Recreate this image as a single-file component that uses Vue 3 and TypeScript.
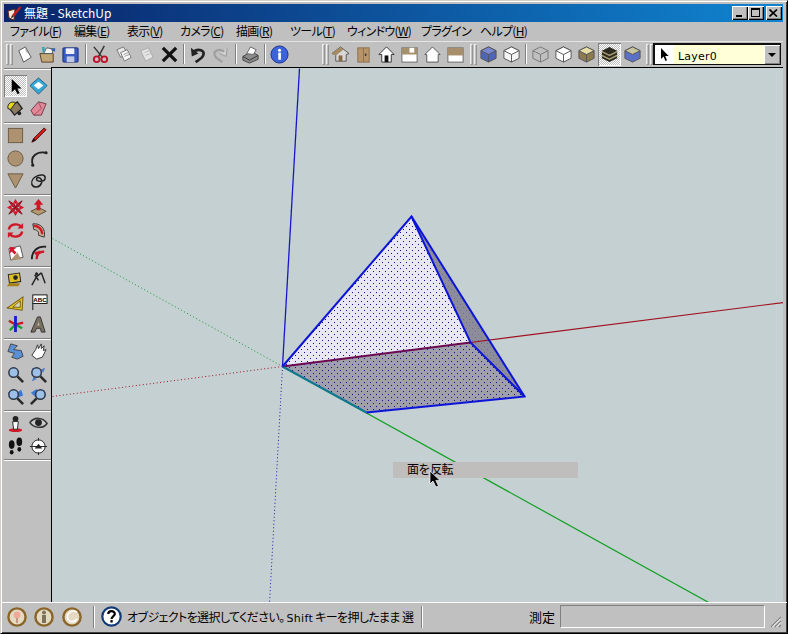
<!-- SketchUp main window, Japanese UI, with a selected pyramid on the canvas -->
<template>
  <div class="window">
    <div class="titlebar">
      <svg class="app-icon" viewBox="0 0 16 16" v-html="appIcon"></svg>
      <span class="title">無題 - SketchUp</span>
      <div class="caption-btns">
        <button class="cap"><span class="cap-min"></span></button>
        <button class="cap"><span class="cap-max"></span></button>
        <button class="cap cap-close"><svg viewBox="0 0 9 8"><path d="M0.5 0.5L8 7.5M8 0.5L0.5 7.5" stroke="#000" stroke-width="1.7" /></svg></button>
      </div>
    </div>

    <nav class="menubar">
      <span v-for="m in menus" :key="m.label" class="menu" :style="{ width: m.w + 'px' }">{{ m.label }}<template v-if="m.key">(<u>{{ m.key }}</u>)</template></span>
    </nav>

    <div class="toolbar">
      <template v-for="(g, gi) in topGroups" :key="gi">
        <span v-if="g.grip" class="grip"><i></i><i></i></span>
        <span v-if="g.gap" class="vsep" :style="{ marginInline: (g.gap - 2) / 2 + 'px' }"></span>
        <span v-for="name in g.icons" :key="name" class="tb-btn" :class="{ pressed: name === 'striped' }">
          <svg viewBox="0 0 20 20" v-html="icons[name]"></svg>
        </span>
        <span v-if="g.pad" class="tb-pad" :style="{ width: g.pad + 'px' }"></span>
      </template>
      <div class="layer-box">
        <span class="layer-swatch">
          <svg viewBox="0 0 10 14"><path d="M1 0V11L3.6 8.6L5.4 13L7 12.2L5.2 8H8.6Z" fill="#000" /></svg>
        </span>
        <span class="layer-name">Layer0</span>
        <span class="layer-drop"><i></i></span>
      </div>
    </div>

    <div class="main">
      <aside class="sidebar">
        <template v-for="(section, si) in sideSections" :key="si">
          <div class="side-rule"></div>
          <div class="side-grid">
            <span v-for="name in section" :key="name" class="side-btn" :class="{ pressed: name === 'select' }">
              <svg viewBox="0 0 20 20" v-html="icons[name]"></svg>
            </span>
          </div>
        </template>
        <div class="side-rule"></div>
      </aside>

      <div class="canvas">
        <svg class="scene" viewBox="51.5 67.5 732 535" width="732" height="535">
          <defs>
            <pattern id="dots" width="6" height="6" patternUnits="userSpaceOnUse" patternTransform="translate(0.5 0.5)">
              <rect x="0" y="0" width="1" height="1" fill="#14147c" />
              <rect x="3" y="3" width="1" height="1" fill="#14147c" />
            </pattern>
          </defs>
          <line x1="299" y1="68" x2="282" y2="366" stroke="#1818c8" stroke-width="1.3" />
          <line x1="282" y1="366" x2="269" y2="603" stroke="#1818b0" stroke-dasharray="1 2.5" />
          <line x1="52" y1="238" x2="282" y2="366" stroke="#119a2a" stroke-dasharray="1 2.5" />
          <line x1="282" y1="366" x2="710" y2="603" stroke="#10a020" stroke-width="1.2" />
          <line x1="52" y1="396" x2="282" y2="366" stroke="#a01020" stroke-dasharray="1 2.5" />

          <polygon points="411,216 524,396 470,342" fill="#8c8c9a" />
          <polygon points="411,216 524,396 470,342" fill="url(#dots)" opacity="0.25" />
          <polygon points="282,366 411,216 470,342" fill="#e9e7f4" />
          <polygon points="282,366 411,216 470,342" fill="url(#dots)" />
          <polygon points="282,366 470,342 524,396 366,412" fill="#a0a0ac" />
          <polygon points="282,366 470,342 524,396 366,412" fill="url(#dots)" />

          <line x1="470" y1="342" x2="783" y2="302" stroke="#a01020" stroke-width="1.2" />
          <line x1="282" y1="366" x2="470" y2="342" stroke="#6a0a50" stroke-width="2" />
          <line x1="282" y1="366" x2="366" y2="412" stroke="#107890" stroke-width="2" />
          <g stroke="#0c14d8" stroke-width="2" fill="none">
            <polyline points="282,366 411,216 524,396 366,412" />
            <polyline points="411,216 470,342 524,396" />
          </g>
        </svg>
        <div class="tooltip">面を反転</div>
        <svg class="cursor" viewBox="0 0 12 18"><path d="M1 1V14L4 11L7 17L9.5 16L6.8 10.4H11Z" fill="#000" stroke="#fff" stroke-width="0.7" /></svg>
      </div>
    </div>

    <footer class="statusbar">
      <span v-for="g in geoIcons" :key="g" class="geo"><svg viewBox="0 0 20 20" v-html="icons[g]"></svg></span>
      <span class="stat-sep"></span>
      <svg class="help" viewBox="0 0 21 21">
        <circle cx="10.5" cy="10.5" r="9.2" fill="#fff" stroke="#123a78" stroke-width="2.2" />
        <path d="M7.2 8C7.4 4.2 13.8 4.2 13.8 7.8C13.8 10.3 10.5 10.3 10.5 12.9" fill="none" stroke="#000" stroke-width="2.2" />
        <rect x="9.4" y="14.1" width="2.3" height="2.4" />
      </svg>
      <span class="stat-text">オブジェクトを選択してください。<span class="latin">Shift</span> キーを押したまま 選</span>
      <span class="stat-sep"></span>
      <span class="measure-label">測定</span>
      <div class="measure"></div>
      <svg class="resize" viewBox="0 0 13 13">
        <path d="M12 2L2 12M12 6L6 12M12 10L10 12" stroke="#808080" stroke-width="1.2" />
        <path d="M12 3.4L3.4 12M12 7.4L7.4 12" stroke="#fff" />
      </svg>
    </footer>
  </div>
</template>

<script setup lang="ts">
interface Menu { label: string; key?: string; w: number }
interface Group { icons: string[]; grip?: boolean; gap?: number; pad?: number }

const menus: Menu[] = [
  { label: 'ファイル', key: 'F', w: 64 },
  { label: '編集', key: 'E', w: 53 },
  { label: '表示', key: 'V', w: 53 },
  { label: 'カメラ', key: 'C', w: 56 },
  { label: '描画', key: 'R', w: 54 },
  { label: 'ツール', key: 'T', w: 57 },
  { label: 'ウィンドウ', key: 'W', w: 74 },
  { label: 'プラグイン', w: 59 },
  { label: 'ヘルプ', key: 'H', w: 50 },
]

const topGroups: Group[] = [
  { grip: true, icons: ['new', 'open', 'save'] },
  { gap: 7, icons: ['cut', 'copy', 'paste', 'erase'] },
  { gap: 5, icons: ['undo', 'redo'] },
  { gap: 7, icons: ['print'] },
  { gap: 6, icons: ['info'], pad: 30 },
  { grip: true, icons: ['house', 'door', 'home', 'top', 'front', 'back'], pad: 2 },
  { grip: true, icons: ['xray', 'cubeEdge'] },
  { gap: 6, icons: ['wire', 'hidden', 'shaded', 'striped', 'mono'], pad: 1 },
  { grip: true, icons: [] },
]

const sideSections: string[][] = [
  ['select', 'component', 'paint', 'eraser'],
  ['rect', 'pencil', 'circle', 'arc', 'polygon', 'freehand'],
  ['move', 'pushpull', 'rotate', 'follow', 'scale', 'offset'],
  ['tape', 'dimension', 'protractor', 'text', 'axes', 'text3d'],
  ['orbit', 'pan', 'zoom', 'zoomWin', 'zoomExt', 'zoomPrev'],
  ['position', 'lookaround', 'walk', 'section'],
]

const geoIcons = ['geoA', 'geoB', 'geoC']

const appIcon = `<path d="M2 6L9 4L8 15L3 13Z" fill="#f4ead8" stroke="#5a2a20" /><path d="M6 10L14 1L15 3L8 12Z" fill="#c02020" /><path d="M6 10L8 12L5 13Z" fill="#402020" />`

const arrowRed = '#d01828'
const tan = '#ac9270'
const mag = `<circle cx="8" cy="8" r="5" fill="#9cc0e8" stroke="#303848" stroke-width="1.6" /><path d="M12 12L18 18" stroke="#2a2a2a" stroke-width="2.6" />`
const blueFan = `<path d="M2 6L8 2L10 7L16 3L18 9L10 12L6 10Z" fill="#3a78d8" />`
const box = (c: string, t: string) =>
  `<path d="M10 2L18 6V14L10 18L2 14V6Z" fill="${c}" stroke="#555" /><path d="M10 2L18 6L10 10L2 6Z" fill="${t}" stroke="#555" /><path d="M10 10V18" stroke="#555" />`
const geo = (inner: string) =>
  `<circle cx="10" cy="10" r="8.6" fill="#e4dac4" stroke="#8a6428" stroke-width="2.4" />${inner}`

const icons: Record<string, string> = {
  new: `<path d="M4 6L11 2L17 13L9 18Z" fill="#fff" stroke="#555" /><path d="M11 2L12 7L15 9" fill="none" stroke="#999" />`,
  open: `<path d="M2 9H16V18H4Z" fill="#c2a878" stroke="#5a4020" /><path d="M6 9L9 3L16 4L15 9Z" fill="#f4f4f4" stroke="#555" /><path d="M4 2H7V8H5Z" fill="#28a8b8" /><path d="M13 5L18 3V7Z" fill="#3060b0" />`,
  save: `<rect x="2" y="3" width="16" height="15" rx="1" fill="#3a5cc0" stroke="#1c2c78" /><rect x="5" y="3.5" width="9" height="6" fill="#f0f0f8" /><rect x="6" y="12" width="8" height="6" fill="#c0c8e8" />`,
  cut: `<path d="M3 2L12 13M14 1L8 12" stroke="#333" stroke-width="1.5" /><circle cx="6" cy="15" r="3" fill="none" stroke="#c01028" stroke-width="2" /><circle cx="14" cy="15" r="3" fill="none" stroke="#c01028" stroke-width="2" />`,
  copy: `<path d="M3 5L10 2L14 9L7 13Z" fill="#e8e8e8" stroke="#777" /><path d="M7 8L14 5L18 13L11 17Z" fill="#f8f8f8" stroke="#777" /><path d="M10 10L15 8M11 12L16 10" stroke="#999" />`,
  paste: `<path d="M4 6L12 3L17 13L9 17Z" fill="#e4e4e4" stroke="#aaa" /><path d="M8 8L13 6M9 11L14 9" stroke="#bbb" />`,
  erase: `<path d="M3 3L17 17M17 3L3 17" stroke="#111" stroke-width="3.4" />`,
  undo: `<path d="M3 3L4 12L11 9" fill="#222" /><path d="M6 7C11 3 18 6 16 11C15 14 11 16 8 18" fill="none" stroke="#222" stroke-width="2.8" />`,
  redo: `<path d="M17 3L16 12L9 9" fill="#d0d0d0" stroke="#999" /><path d="M14 7C9 3 2 6 4 11C5 14 9 16 12 18" fill="none" stroke="#a0a0a0" stroke-width="2.4" />`,
  print: `<path d="M2 12L11 7L18 11V15L9 19L2 16Z" fill="#8c8c8c" stroke="#444" /><path d="M6 9L10 2L16 5L13 10Z" fill="#fff" stroke="#666" /><path d="M2 12L9 16L18 11" fill="none" stroke="#333" />`,
  info: `<circle cx="10" cy="10" r="9" fill="#3c64d8" stroke="#1c2c88" /><circle cx="10" cy="5.5" r="1.6" fill="#fff" /><rect x="8.7" y="8" width="2.8" height="7.5" fill="#fff" />`,
  house: `<path d="M1 9L10 2L19 9L16 10V17H5V10Z" fill="#d8d8d8" stroke="#555" /><path d="M1 9L10 2L13 5L5 11Z" fill="#a88a62" /><rect x="8" y="11" width="4" height="6" fill="#8a6a42" />`,
  door: `<rect x="4" y="3" width="12" height="15" fill="#b89468" stroke="#8a7050" /><path d="M10 3V18" stroke="#8a7050" /><rect x="11.5" y="9" width="1.5" height="2.5" fill="#333" />`,
  home: `<path d="M2 10L10 2L18 10H15V18H5V10Z" fill="#fff" stroke="#333" /><rect x="8" y="11" width="4" height="7" fill="#111" />`,
  top: `<rect x="2" y="3" width="16" height="15" fill="#fff" stroke="#666" /><rect x="2" y="3" width="16" height="7" fill="#a88f6c" /><rect x="10" y="3" width="5" height="5" fill="#fff" />`,
  front: `<path d="M2 10L10 2L18 10H16V18H4V10Z" fill="#fff" stroke="#555" />`,
  back: `<rect x="2" y="3" width="16" height="15" fill="#fff" stroke="#666" /><rect x="2" y="3" width="16" height="8" fill="#a88f6c" />`,
  xray: box('#5064b8', '#7888d0'),
  cubeEdge: box('#f4f4f4', '#fff'),
  wire: `<g fill="none" stroke="#777"><path d="M10 2L18 6V14L10 18L2 14V6Z" /><path d="M2 6L10 10L18 6M10 10V18" /></g>`,
  hidden: box('#fff', '#fff'),
  shaded: box('#8c7a52', '#e8dfa8'),
  striped: `<path d="M10 2L18 6V14L10 18L2 14V6Z" fill="#2a2a20" /><path d="M2 7L10 11L18 7M2 11L10 15L18 11" stroke="#a89a70" stroke-width="1.6" fill="none" />`,
  mono: `<path d="M10 2L18 6V14L10 18L2 14V6Z" fill="#5c70c8" stroke="#555" /><path d="M10 2L18 6L10 10L2 6Z" fill="#c8c49c" stroke="#555" />`,

  select: `<path d="M6 2V16L9.5 13L12 18L14.4 17L12 12H16.4Z" fill="#000" />`,
  component: `<path d="M10 1L19 9L10 18L1 9Z" fill="#38a8d8" stroke="#206080" /><path d="M10 5L15 9L10 13L5 9Z" fill="#fff" />`,
  paint: `<path d="M3 9L12 3L17 10L9 17Z" fill="#8a7a60" stroke="#222" stroke-width="1.4" /><path d="M2 10C1 4 7 2 10 4L5 11Z" fill="#e8d820" stroke="#222" /><circle cx="14" cy="15" r="2" fill="#222" />`,
  eraser: `<path d="M2 12L10 3L18 5L13 17L5 17Z" fill="#e08898" stroke="#703848" /><path d="M10 3L13 10L5 17" fill="none" stroke="#a05060" />`,
  rect: `<rect x="2.5" y="2.5" width="15" height="15" fill="${tan}" stroke="#6c5a40" />`,
  pencil: `<path d="M3 17L5 13L16 2L18 4L7 15Z" fill="#d81c1c" stroke="#501010" /><path d="M3 17L5 13L7 15Z" fill="#111" />`,
  circle: `<circle cx="10" cy="10" r="8" fill="${tan}" stroke="#6c5a40" />`,
  arc: `<path d="M4 17C1 8 8 2 18 4" fill="none" stroke="#222" stroke-width="2" /><circle cx="4" cy="17" r="1.6" fill="#222" /><circle cx="18" cy="4" r="1.6" fill="#222" />`,
  polygon: `<path d="M2 3H18L10 18Z" fill="${tan}" stroke="#6c5a40" />`,
  freehand: `<path d="M3 14C1 5 17 1 17 7C17 12 7 12 8 8C9 5 15 8 13 13C11 18 5 18 3 14Z" fill="none" stroke="#222" stroke-width="1.6" />`,
  move: `<path d="M3 3L9 7L10 10L7 9ZM17 3L11 7L10 10L13 9ZM3 17L9 13L10 10L7 11ZM17 17L11 13L10 10L13 11Z" fill="${arrowRed}" stroke="#801020" /><path d="M10 1L13 6H7ZM10 19L13 14H7ZM1 10L6 7V13ZM19 10L14 7V13Z" fill="${arrowRed}" />`,
  pushpull: `<path d="M2 14L10 10L18 14L10 18Z" fill="#b49a70" stroke="#5a4a30" /><path d="M10 1L15 7H12V13H8V7H5Z" fill="${arrowRed}" />`,
  rotate: `<path d="M3 9C4 3 13 2 16 6" fill="none" stroke="${arrowRed}" stroke-width="2.6" /><path d="M18 2V8H12Z" fill="${arrowRed}" /><path d="M17 11C16 17 7 18 4 14" fill="none" stroke="${arrowRed}" stroke-width="2.6" /><path d="M2 18V12H8Z" fill="${arrowRed}" />`,
  follow: `<path d="M4 3C12 2 18 8 16 17L10 15C11 11 8 9 5 9Z" fill="#c8b898" stroke="#333" /><path d="M5 5C10 5 14 9 14 14" fill="none" stroke="${arrowRed}" stroke-width="2.6" />`,
  scale: `<path d="M3 6L15 3L18 15L5 18Z" fill="#fff" stroke="#555" /><path d="M12 10L16 17L5 18Z" fill="${tan}" /><path d="M4 4L11 5L8 7L11 10L9 12L6 9L4 11Z" fill="${arrowRed}" />`,
  offset: `<path d="M3 17C3 8 9 3 18 4" fill="none" stroke="#222" stroke-width="2" /><path d="M8 17C8 12 11 9 16 9" fill="none" stroke="${arrowRed}" stroke-width="2.4" /><path d="M5 10L12 8L9 15Z" fill="${arrowRed}" />`,
  tape: `<path d="M3 4H15V13H3Z" fill="#e0c020" stroke="#222" transform="rotate(-8 9 9)" /><circle cx="10" cy="8" r="2.4" fill="#222" /><path d="M3 14L1 17H13L15 14Z" fill="#a88018" />`,
  dimension: `<path d="M3 16L8 7M13 3L17 14M8 7L13 3M6 5L10 11" stroke="#222" stroke-width="1.5" fill="none" /><circle cx="8" cy="4" r="1.6" fill="#222" />`,
  protractor: `<path d="M2 17L17 3L18 17Z" fill="#e8c820" stroke="#705a10" transform="rotate(8 10 10)" /><path d="M7 15L15 8V15Z" fill="#d8d8c0" stroke="#705a10" />`,
  text: `<rect x="4" y="2" width="15" height="9" fill="#fff" stroke="#111" /><path d="M4 11V18" stroke="#111" /><text x="11.5" y="9" font-family="Liberation Sans, sans-serif" font-size="6.5" font-weight="700" text-anchor="middle">ABC</text>`,
  axes: `<path d="M10 10L4 16M10 10L17 14" stroke="#18a030" stroke-width="2.4" /><path d="M10 10L3 6M10 10L18 8" stroke="#c81818" stroke-width="2.4" /><path d="M10 1V18" stroke="#1820c8" stroke-width="3" />`,
  text3d: `<path d="M2 18L9 2H12L17 18H13L12 14H8L6 18Z" fill="#7a7060" stroke="#333" /><path d="M9 11H11L10 7Z" fill="#c0c0c0" />`,
  orbit: `<path d="M5 2L12 4L8 8L16 9L18 15L12 18L6 16L9 12L2 10Z" fill="#5a90d8" stroke="#444" />`,
  pan: `<path d="M3 14L7 8L9 3L10 7L13 2L13 7L16 4L15 9L18 8L14 16L8 18Z" fill="#fff" stroke="#333" />`,
  zoom: mag,
  zoomWin: `<path d="M3 3L8 5L5 8ZM17 3L12 5L15 8ZM3 17L5 12L8 15Z" fill="#4a7cc8" />${mag}`,
  zoomExt: `${blueFan}${mag}`,
  zoomPrev: `${blueFan}<g transform="matrix(-1 0 0 1 20 0)">${mag}</g>`,
  position: `<ellipse cx="10" cy="17" rx="7" ry="2" fill="#d01828" /><circle cx="10" cy="5" r="3" fill="#222" /><path d="M7 8H13L12 16H8Z" fill="#fff" stroke="#222" />`,
  lookaround: `<path d="M1 9C5 3 15 3 19 10C15 16 5 15 1 9Z" fill="#ccc" stroke="#333" stroke-width="1.6" /><circle cx="10" cy="9" r="3.6" fill="#222" />`,
  walk: `<ellipse cx="6" cy="8" rx="3" ry="4.6" fill="#111" /><ellipse cx="6" cy="16" rx="2" ry="2.4" fill="#111" /><ellipse cx="14" cy="5" rx="3" ry="4.6" fill="#111" /><ellipse cx="14" cy="13" rx="2" ry="2.4" fill="#111" />`,
  section: `<circle cx="10" cy="10" r="7" fill="#fff" stroke="#222" /><path d="M1 10H19M10 1V4M10 16V19" stroke="#222" /><path d="M6 12H14L10 7Z" fill="#222" />`,

  geoA: geo(`<circle cx="10" cy="8" r="3.4" fill="#f0a898" /><path d="M10 11V16" stroke="#b88870" stroke-width="1.6" />`),
  geoB: geo(`<circle cx="10" cy="5.5" r="2" fill="#7a7458" /><rect x="8" y="8" width="4" height="8" fill="#7a7458" />`),
  geoC: geo(`<path d="M15 5C9 2 4 7 6 12C8 16 13 15 15 12" fill="none" stroke="#fff" stroke-width="1.6" />`),
}
</script>

<style scoped>
.window {
  width: 788px;
  height: 634px;
  box-sizing: border-box;
  display: flex;
  flex-direction: column;
  overflow: hidden;
  background: #c0c0c0;
  border: 1px solid;
  border-color: #d4d0c8 #000 #000 #d4d0c8;
  box-shadow: inset 1px 1px 0 #fff, inset -1px -1px 0 #404040;
  padding: 3px 4px 3px 3px;
  font-family: "Noto Sans CJK JP", sans-serif;
  font-size: 12px;
  color: #000;
}

.titlebar {
  height: 18px;
  flex: none;
  display: flex;
  align-items: center;
  padding-left: 2px;
  background: linear-gradient(90deg, #0a246a, #1084d0);
  color: #fff;
}
.app-icon { width: 16px; height: 16px; margin-right: 2px; }
.title { font-feature-settings: "palt"; line-height: 18px; }
.caption-btns { margin-left: auto; margin-right: 1px; display: flex; }
.cap {
  width: 16px;
  height: 14px;
  padding: 0;
  margin: 0;
  border: 0;
  background: #c0c0c0;
  box-shadow: inset 1px 1px 0 #fff, inset -1px -1px 0 #000, inset -2px -2px 0 #808080;
  position: relative;
}
.cap-close { margin-left: 2px; }
.cap-close svg { position: absolute; left: 3px; top: 3px; width: 9px; height: 8px; }
.cap-min { position: absolute; left: 4px; bottom: 3px; width: 6px; height: 2px; background: #000; }
.cap-max { position: absolute; left: 3px; top: 2px; width: 9px; height: 9px; box-sizing: border-box; border: 1px solid #000; border-top-width: 2px; }

.menubar {
  height: 20px;
  flex: none;
  box-sizing: border-box;
  display: flex;
  align-items: center;
  padding: 0 0 2px 6px;
  border-bottom: 1px solid #e4e4e4;
  font-feature-settings: "palt";
}
.menu { white-space: nowrap; letter-spacing: -0.7px; }

.toolbar {
  height: 25px;
  flex: none;
  display: flex;
  align-items: center;
  padding: 0 0 1px 1px;
  box-sizing: border-box;
}
.grip {
  width: 7px;
  height: 21px;
  margin-left: 1px;
  flex: none;
  display: flex;
  gap: 1px;
}
.grip i {
  width: 3px;
  box-sizing: border-box;
  border: 1px solid;
  border-color: #eee #949494 #949494 #eee;
}
.vsep {
  width: 2px;
  height: 20px;
  flex: none;
  border-left: 1px solid #808080;
  border-right: 1px solid #fff;
  box-sizing: border-box;
}
.tb-pad { flex: none; }
.tb-btn {
  width: 23px;
  height: 23px;
  flex: none;
  display: flex;
  align-items: center;
  justify-content: center;
}
.tb-btn svg { width: 19px; height: 19px; }
.tb-btn.pressed {
  background: repeating-conic-gradient(#fff 0 25%, #c0c0c0 0 50%) 0 0 / 2px 2px;
  box-shadow: inset 1px 1px 0 #808080, inset -1px -1px 0 #fff;
}
.layer-box {
  width: 128px;
  height: 22px;
  flex: none;
  box-sizing: border-box;
  display: flex;
  align-items: stretch;
  border: 1px solid #101010;
  border-top-width: 2px;
  border-left-width: 2px;
  background: #ffffd8;
  font-family: "DejaVu Sans", sans-serif;
}
.layer-swatch {
  width: 19px;
  background: #fff;
  display: flex;
  align-items: center;
  justify-content: center;
}
.layer-swatch svg { width: 10px; height: 14px; }
.layer-name { margin-left: 4px; font-size: 11px; letter-spacing: 0.2px; line-height: 23px; }
.layer-drop {
  margin-left: auto;
  width: 16px;
  background: #c0c0c0;
  box-shadow: inset 1px 1px 0 #fff, inset -1px -1px 0 #808080;
  display: flex;
  align-items: center;
  justify-content: center;
}
.layer-drop i { border: 4px solid transparent; border-top: 4px solid #000; border-bottom: 0; }

.main { flex: 1; display: flex; min-height: 0; margin-left: -3px; margin-right: -4px; }
.sidebar {
  width: 50px;
  flex: none;
  box-sizing: border-box;
  padding-left: 3px;
  display: flex;
  flex-direction: column;
}
.side-rule {
  height: 2px;
  flex: none;
  box-sizing: border-box;
  border-top: 1px solid #808080;
  border-bottom: 1px solid #fff;
  margin: 2px 0 1px;
}
.side-rule:first-child { margin: 1px 0 5px; }
.side-grid { display: grid; grid-template-columns: 23px 23px; grid-auto-rows: 22.33px; }
.side-btn { display: flex; align-items: center; justify-content: center; }
.side-btn svg { width: 19px; height: 19px; }
.side-btn.pressed {
  background: repeating-conic-gradient(#fff 0 25%, #c0c0c0 0 50%) 0 0 / 2px 2px;
  box-shadow: inset 1px 1px 0 #808080, inset -1px -1px 0 #fff;
}

.canvas {
  position: relative;
  flex: 1;
  overflow: hidden;
  background: #c4d0d2;
  border-top: 1px solid #000;
  border-left: 1px solid #000;
  margin-right: 4px;
}
.scene { display: block; }
.tooltip {
  position: absolute;
  left: 341px;
  top: 394px;
  width: 171px;
  height: 16px;
  padding-left: 14px;
  line-height: 14px;
  letter-spacing: -0.5px;
  background: #c0bebc;
}
.cursor { position: absolute; left: 377px; top: 402px; width: 12px; height: 18px; }

.statusbar {
  height: 27px;
  flex: none;
  display: flex;
  align-items: center;
  border-top: 1px solid #fff;
  margin-left: -3px;
  margin-right: -4px;
  padding: 0 4px 0 2px;
}
.geo { width: 27.5px; flex: none; display: flex; justify-content: center; }
.geo svg { width: 20px; height: 20px; }
.stat-sep { width: 2px; height: 22px; flex: none; border-left: 1px solid #808080; border-right: 1px solid #fff; box-sizing: border-box; margin-left: 7px; }
.help { width: 21px; height: 21px; flex: none; margin: 0 5.5px 0 6px; }
.stat-text { font-feature-settings: "palt"; white-space: nowrap; width: 287px; flex: none; letter-spacing: -0.6px; }
.latin { font-family: "DejaVu Sans", sans-serif; font-size: 11px; letter-spacing: 0.3px; margin-left: 2px; }
.measure-label { margin-left: 106px; flex: none; white-space: nowrap; font-size: 13px; }
.measure {
  width: 205px;
  height: 23px;
  flex: none;
  margin-left: 5px;
  box-sizing: border-box;
  border: 1px solid;
  border-color: #808080 #fff #fff #808080;
}
.resize { width: 13px; height: 13px; flex: none; margin: 10px 0 0 4px; }
</style>
